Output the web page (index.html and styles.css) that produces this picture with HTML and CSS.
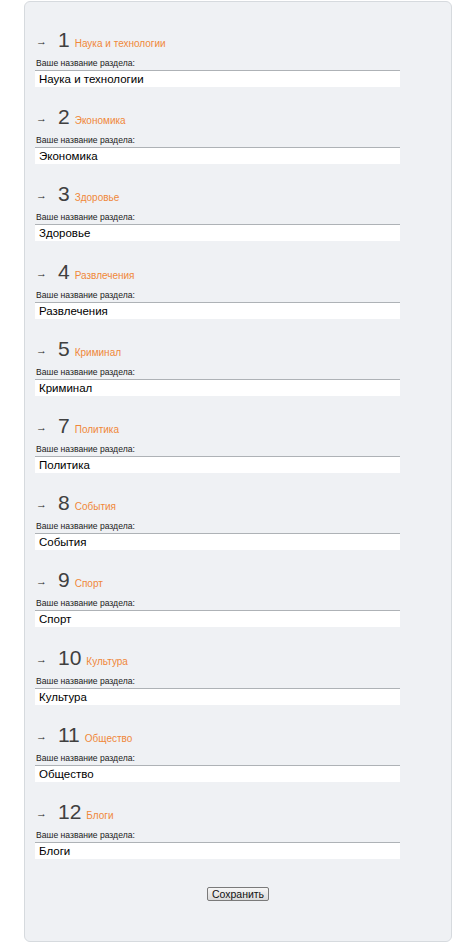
FILE: index.html
```html
<!DOCTYPE html>
<html>
<head>
<meta charset="utf-8">
<link rel="stylesheet" href="styles.css">
</head>
<body>
<form class="panel">
  <div class="section">
    <div class="heading"><span class="arrow">→</span><span class="num">1</span><span class="title">Наука и технологии</span></div>
    <div class="label">Ваше название раздела:</div>
    <input class="field" type="text" value="Наука и технологии">
  </div>
  <div class="section">
    <div class="heading"><span class="arrow">→</span><span class="num">2</span><span class="title">Экономика</span></div>
    <div class="label">Ваше название раздела:</div>
    <input class="field" type="text" value="Экономика">
  </div>
  <div class="section">
    <div class="heading"><span class="arrow">→</span><span class="num">3</span><span class="title">Здоровье</span></div>
    <div class="label">Ваше название раздела:</div>
    <input class="field" type="text" value="Здоровье">
  </div>
  <div class="section">
    <div class="heading"><span class="arrow">→</span><span class="num">4</span><span class="title">Развлечения</span></div>
    <div class="label">Ваше название раздела:</div>
    <input class="field" type="text" value="Развлечения">
  </div>
  <div class="section">
    <div class="heading"><span class="arrow">→</span><span class="num">5</span><span class="title">Криминал</span></div>
    <div class="label">Ваше название раздела:</div>
    <input class="field" type="text" value="Криминал">
  </div>
  <div class="section">
    <div class="heading"><span class="arrow">→</span><span class="num">7</span><span class="title">Политика</span></div>
    <div class="label">Ваше название раздела:</div>
    <input class="field" type="text" value="Политика">
  </div>
  <div class="section">
    <div class="heading"><span class="arrow">→</span><span class="num">8</span><span class="title">События</span></div>
    <div class="label">Ваше название раздела:</div>
    <input class="field" type="text" value="События">
  </div>
  <div class="section">
    <div class="heading"><span class="arrow">→</span><span class="num">9</span><span class="title">Спорт</span></div>
    <div class="label">Ваше название раздела:</div>
    <input class="field" type="text" value="Спорт">
  </div>
  <div class="section">
    <div class="heading"><span class="arrow">→</span><span class="num">10</span><span class="title">Культура</span></div>
    <div class="label">Ваше название раздела:</div>
    <input class="field" type="text" value="Культура">
  </div>
  <div class="section">
    <div class="heading"><span class="arrow">→</span><span class="num">11</span><span class="title">Общество</span></div>
    <div class="label">Ваше название раздела:</div>
    <input class="field" type="text" value="Общество">
  </div>
  <div class="section">
    <div class="heading"><span class="arrow">→</span><span class="num">12</span><span class="title">Блоги</span></div>
    <div class="label">Ваше название раздела:</div>
    <input class="field" type="text" value="Блоги">
  </div>
  <div class="actions">
    <button class="save" type="button">Сохранить</button>
  </div>
</form>
</body>
</html>
```

FILE: styles.css
```css
html, body {
  margin: 0;
  padding: 0;
  background: #ffffff;
  font-family: "Liberation Sans", Arial, sans-serif;
}
.panel {
  box-sizing: border-box;
  margin: 1px 0 0 24px;
  width: 428px;
  height: 941px;
  background: #eff1f4;
  border: 1px solid #d6dade;
  border-radius: 6px;
  padding: 26px 0 0 10px;
}
.section {
  margin-bottom: 18.2px;
}
.heading {
  display: flex;
  align-items: baseline;
  height: 24px;
  line-height: 24px;
}
.arrow {
  align-self: center;
  font-size: 11px;
  line-height: 12px;
  color: #222;
  width: 23px;
  padding-left: 1px;
  box-sizing: border-box;
  position: relative;
  top: 1px;
}
.num {
  font-size: 21px;
  color: #404040;
  margin-right: 5px;
}
.title {
  font-size: 10px;
  color: #f0883a;
}
.label {
  margin-top: 5px;
  font-size: 8.6px;
  line-height: 12px;
  color: #222;
  padding-left: 1px;
}
.field {
  display: block;
  box-sizing: border-box;
  margin: 1px 0 0 0;
  width: 365px;
  height: 17px;
  padding: 0 0 0 4px;
  border: none;
  border-top: 1px solid #aeb2b6;
  background: #fff;
  font-family: "Liberation Sans", Arial, sans-serif;
  font-size: 11.5px;
  color: #000;
  outline: none;
}
.actions {
  display: flex;
  justify-content: center;
  padding-right: 10px;
  padding-top: 10px;
}
.save {
  height: 14px;
  padding: 0 4px;
  font-family: "Liberation Sans", Arial, sans-serif;
  font-size: 10.5px;
  line-height: 12px;
  color: #111;
  background: linear-gradient(#f6f6f6, #dadada);
  border: 1px solid #7a7a7a;
  border-radius: 2px;
}
```
